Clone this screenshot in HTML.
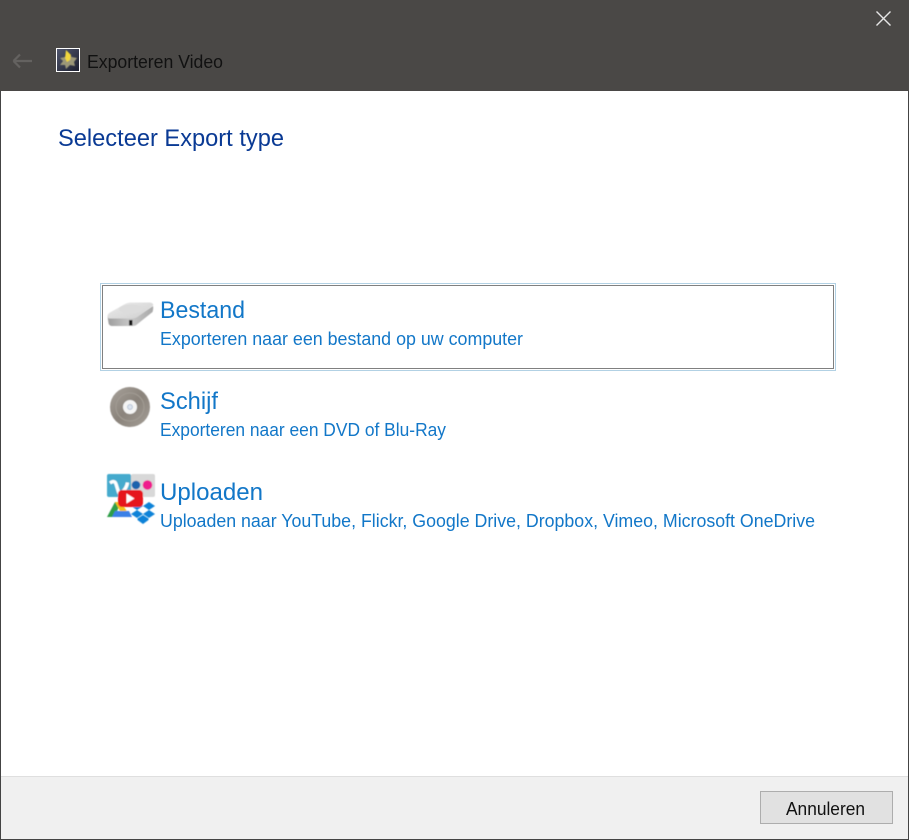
<!DOCTYPE html>
<html>
<head>
<meta charset="utf-8">
<style>
html,body{margin:0;padding:0;background:#fff;}
body{width:909px;height:840px;overflow:hidden;}
svg{display:block;}
text{font-family:"Liberation Sans",sans-serif;}
</style>
</head>
<body>
<svg width="909" height="840" viewBox="0 0 909 840" xmlns="http://www.w3.org/2000/svg">
<defs>
<linearGradient id="disc" x1="0" y1="0" x2="1" y2="1"><stop offset="0" stop-color="#a8a29b"/><stop offset=".5" stop-color="#8a837b"/><stop offset="1" stop-color="#a49e97"/></linearGradient>
<linearGradient id="hddtop" x1="0" y1="0" x2="1" y2="1"><stop offset="0" stop-color="#ececec"/><stop offset="1" stop-color="#cfcfcf"/></linearGradient>
<linearGradient id="hddfront" x1="0" y1="0" x2="1" y2="0"><stop offset="0" stop-color="#9d9d9d"/><stop offset=".5" stop-color="#c8c8c8"/><stop offset="1" stop-color="#a8a8a8"/></linearGradient>
<linearGradient id="ph" x1="0" y1="0" x2="1" y2="1"><stop offset="0" stop-color="#50566e"/><stop offset="1" stop-color="#1d2030"/></linearGradient>
<filter id="soft" x="-10%" y="-10%" width="120%" height="120%"><feGaussianBlur stdDeviation="0.45"/></filter>
</defs>
<rect width="909" height="840" fill="#fff"/>
<!-- title bar -->
<rect width="909" height="91" fill="#4a4846"/>
<path d="M13.500 61H32M13.500 61l6.500-6.500M13.500 61l6.500 6.500" fill="none" stroke="#646260" stroke-width="2.200"/>
<rect x="56" y="48" width="24" height="24" fill="#fff"/>
<rect x="57" y="49" width="22" height="22" fill="url(#ph)"/>
<g filter="url(#soft)">
<path d="M67 54l5 3 5 1-3 4 1 4-5-1-4 4-1-4-5 0 3-4-3-3 5-1z" fill="#9c9878"/>
<path d="M66 50l3 3 2 2-1 5-3 2-2-4z" fill="#f0d63e"/>
</g>
<text x="87" y="68" font-size="18" fill="#111" textLength="136" lengthAdjust="spacingAndGlyphs">Exporteren Video</text>
<path d="M876.500 11.500l14 14M890.500 11.500l-14 14" fill="none" stroke="#e6e6e6" stroke-width="1.400"/>
<!-- window edges -->
<rect x="0" y="91" width="1" height="749" fill="#444"/>
<rect x="908" y="91" width="1" height="749" fill="#444"/>
<!-- heading -->
<text x="58" y="146" font-size="24" fill="#0a3a94" textLength="226" lengthAdjust="spacingAndGlyphs">Selecteer Export type</text>
<!-- focus box -->
<rect x="100.500" y="283.500" width="735" height="87" fill="#fff" stroke="#b2d1e4" stroke-width="1" shape-rendering="crispEdges"/>
<rect x="102.500" y="285.500" width="731" height="83" fill="none" stroke="#000" stroke-width="1" stroke-dasharray="1 1" shape-rendering="crispEdges"/>
<!-- HDD icon -->
<g filter="url(#soft)">
<path d="M107.500 316l1 7c.300 2 2 3 4 3h20c2 0 3.500-.500 5-2l15-12c.500-1.500 1-4 .500-6l-16 11h-24z" fill="url(#hddfront)"/>
<path d="M107.500 316c0-1.500 1-2.500 2.500-3.500l15-8.500c2-1 4-1.500 6-1.500h18c3 0 5 1.500 4 3l-15 11c-2 1.500-4 2-7 2h-21c-1.500 0-2.500-1-2.500-2.500z" fill="url(#hddtop)"/>
<ellipse cx="131" cy="309" rx="12" ry="4.500" fill="#dcdcdc"/>
<rect x="129" y="320" width="3.500" height="5.500" fill="#161616"/>
</g>
<!-- Disc icon -->
<g filter="url(#soft)">
<circle cx="130" cy="407" r="20" fill="url(#disc)"/>
<circle cx="130" cy="407" r="14" fill="none" stroke="#a29c94" stroke-width="1"/>
<circle cx="130" cy="407" r="7" fill="#f4f4f4"/>
<circle cx="130" cy="407" r="2.500" fill="#dbe3ee" stroke="#a7b7cc" stroke-width=".7"/>
</g>
<!-- Services icon -->
<g filter="url(#soft)">
<rect x="107" y="474" width="24" height="23" rx="2" fill="#45aacd"/>
<path d="M110 483c3-2 5-2 6 1l2.500 8c.500 2 2 2 3.500.5 3-3 5-6 5.500-10" fill="none" stroke="#fff" stroke-width="3.400"/>
<rect x="131" y="474" width="24" height="23" rx="2" fill="#d8d8d8"/>
<circle cx="136" cy="485" r="4.300" fill="#1a62ad"/>
<circle cx="147.500" cy="485" r="4.800" fill="#ef1b8d"/>
<path d="M115 502h6l-6.500 15h-7.500z" fill="#2f9e48"/>
<path d="M115 502h6l7 11h-7z" fill="#f3c21b"/>
<path d="M112 517l3-6h14l3 6z" fill="#3b80e6"/>
<path d="M137 502l6 4-6 4-6-4zM149 502l6 4-6 4-6-4zM137 510l6 4-6 4-6-4zM149 510l6 4-6 4-6-4zM143 515l5.500 3.500v1.500l-5.500 4-5.500-4v-1.500z" fill="#0f82d8"/>
<rect x="118" y="490" width="25" height="17" rx="4" fill="#e6141c"/>
<path d="M126.500 493.500l8 5-8 5z" fill="#fff"/>
</g>
<!-- items -->
<text x="160" y="318" font-size="24" fill="#1277c8" textLength="85" lengthAdjust="spacingAndGlyphs">Bestand</text>
<text x="160" y="345" font-size="18" fill="#1277c8" textLength="363" lengthAdjust="spacingAndGlyphs">Exporteren naar een bestand op uw computer</text>
<text x="160" y="409" font-size="24" fill="#1277c8" textLength="58" lengthAdjust="spacingAndGlyphs">Schijf</text>
<text x="160" y="436" font-size="18" fill="#1277c8" textLength="286" lengthAdjust="spacingAndGlyphs">Exporteren naar een DVD of Blu-Ray</text>
<text x="160" y="500" font-size="24" fill="#1277c8" textLength="103" lengthAdjust="spacingAndGlyphs">Uploaden</text>
<text x="160" y="527" font-size="18" fill="#1277c8" textLength="655" lengthAdjust="spacingAndGlyphs">Uploaden naar YouTube, Flickr, Google Drive, Dropbox, Vimeo, Microsoft OneDrive</text>
<!-- footer -->
<rect x="1" y="776" width="907" height="63" fill="#f0f0f0"/>
<rect x="1" y="776" width="907" height="1" fill="#dfdfdf"/>
<rect x="760.500" y="791.500" width="132" height="32" fill="#e1e1e1" stroke="#adadad"/>
<text x="786" y="815" font-size="18" fill="#111" textLength="79" lengthAdjust="spacingAndGlyphs">Annuleren</text>
<rect x="0" y="839" width="909" height="1" fill="#444"/>
</svg>
</body>
</html>
